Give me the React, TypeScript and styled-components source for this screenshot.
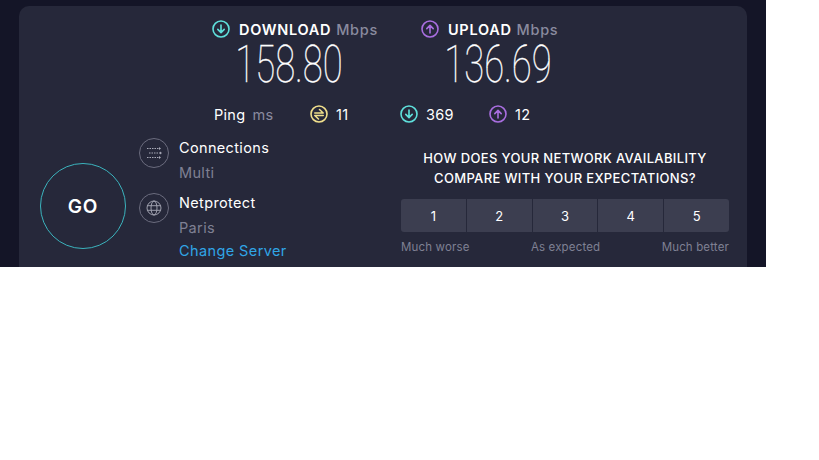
import * as React from "react";
import styled, { createGlobalStyle } from "styled-components";

const GlobalStyle = createGlobalStyle`
  html, body {
    margin: 0;
    padding: 0;
    background: #ffffff;
    font-family: "Inter", "Noto Sans", sans-serif;
  }
`;

const Page = styled.div`
  width: 766px;
  height: 267px;
  box-sizing: border-box;
  padding: 6px 19px 0;
  background: #141527;
  overflow: hidden;
`;

const Card = styled.div`
  height: 280px;
  box-sizing: border-box;
  padding-top: 14px;
  background: #26283a;
  border-radius: 10px;
`;

const Speeds = styled.div`
  display: flex;
  padding-left: 193px;
  gap: 43px;
`;

const SpeedCol = styled.div`
  width: 166px;
  display: flex;
  flex-direction: column;
`;

const SpeedHead = styled.div`
  display: flex;
  align-items: center;
  gap: 9px;
  height: 18px;
`;

const HeadLabel = styled.span`
  font-size: 14.5px;
  font-weight: 600;
  color: #ffffff;
  letter-spacing: 0.7px;
  white-space: nowrap;
`;

const Unit = styled.span`
  font-weight: 500;
  color: #8a8b9f;
  margin-left: 5px;
`;

const Value = styled.div`
  margin: 2px 0 0 -1px;
  height: 49px;
  width: 156px;
  font-family: "Roboto", sans-serif;
  font-weight: 100;
  font-size: 52px;
  line-height: 49px;
  color: #ffffff;
  text-align: center;
  white-space: nowrap;
  transform: scaleX(0.7);
  -webkit-text-stroke: 0.3px #ffffff;
`;

const PingRow = styled.div`
  display: flex;
  align-items: center;
  margin-top: 16px;
  padding-left: 195px;
  height: 18px;
`;

const PingLabel = styled.span`
  width: 96px;
  font-size: 14.5px;
  letter-spacing: 0.3px;
  color: #ffffff;
  white-space: nowrap;
`;

const PingUnit = styled.span`
  color: #8a8b9f;
  margin-left: 7px;
`;

const PingItem = styled.div<{ $width: number }>`
  display: flex;
  align-items: center;
  gap: 8px;
  width: ${(p) => p.$width}px;
  font-size: 14.5px;
  letter-spacing: 0.3px;
  color: #ffffff;
`;

const Lower = styled.div`
  display: flex;
  margin-top: 16px;
`;

const GoColumn = styled.div`
  width: 120px;
  padding: 24px 0 0 21px;
  box-sizing: border-box;
`;

const GoButton = styled.div`
  width: 86px;
  height: 86px;
  box-sizing: border-box;
  border: 1px solid #3bb3bd;
  border-radius: 50%;
  display: flex;
  align-items: center;
  justify-content: center;
  font-size: 19px;
  font-weight: 600;
  letter-spacing: 0.8px;
  color: #ffffff;
`;

const Info = styled.div`
  width: 262px;
  display: flex;
  flex-direction: column;
`;

const InfoRow = styled.div`
  display: flex;
  gap: 10px;
  height: 55px;
`;

const IconRing = styled.div`
  width: 30px;
  height: 30px;
  margin-top: -1px;
  box-sizing: border-box;
  border: 1px solid #6b6c7e;
  border-radius: 50%;
  display: flex;
  align-items: center;
  justify-content: center;
  color: #a9aab8;
`;

const InfoText = styled.div`
  display: flex;
  flex-direction: column;
  gap: 7px;
  font-size: 14.5px;
  line-height: 18px;
  letter-spacing: 0.35px;
`;

const InfoTitle = styled.div`
  color: #ffffff;
`;

const InfoSub = styled.div`
  color: #7f8093;
`;

const ChangeServer = styled.div`
  margin: -7px 0 0 40px;
  font-size: 14.5px;
  line-height: 18px;
  letter-spacing: 0.4px;
  color: #30a5e6;
`;

const Survey = styled.div`
  width: 328px;
  display: flex;
  flex-direction: column;
  padding-top: 9px;
`;

const Question = styled.div`
  font-size: 13px;
  font-weight: 500;
  line-height: 20px;
  letter-spacing: 0.35px;
  text-align: center;
  white-space: nowrap;
  color: #ffffff;
`;

const Scale = styled.div`
  display: grid;
  grid-template-columns: repeat(5, 1fr);
  gap: 1px;
  margin-top: 11px;
  height: 33px;
  border-radius: 3px;
  overflow: hidden;
`;

const ScaleCell = styled.div`
  background: #3c3e50;
  display: flex;
  align-items: center;
  justify-content: center;
  font-size: 13px;
  color: #ffffff;
`;

const ScaleLabels = styled.div`
  display: flex;
  justify-content: space-between;
  margin-top: 8px;
  font-size: 11.5px;
  line-height: 14px;
  letter-spacing: 0.15px;
  color: #7f8093;
`;

const Arrow = ({ color, up }: { color: string; up?: boolean }) => (
  <svg width="18" height="18" viewBox="0 0 18 18" fill="none" stroke={color} strokeWidth="1.6" strokeLinecap="round" strokeLinejoin="round">
    <circle cx="9" cy="9" r="8" />
    {up ? <path d="M9 13V5.5M5.8 8.6 9 5.4l3.2 3.2" /> : <path d="M9 5v7.5M5.8 9.4 9 12.6l3.2-3.2" />}
  </svg>
);

const PingIcon = () => (
  <svg width="18" height="18" viewBox="0 0 18 18" fill="none" stroke="#f0df8c" strokeWidth="1.6" strokeLinecap="round" strokeLinejoin="round">
    <circle cx="9" cy="9" r="8" />
    <path d="M4.800 8h8.400L9.500 4.500M13.200 10.500H4.800L8.500 14" />
  </svg>
);

const ConnectionsIcon = () => (
  <svg width="16" height="14" viewBox="0 0 16 14" fill="none" stroke="currentColor" strokeWidth="1">
    <path d="M1 2.500h12M3 7h11M1 11.500h12" strokeDasharray="1.500 1" />
    <path d="M13 1l2 1.500-2 1.500zM14 5.500l2 1.500-2 1.500zM13 10l2 1.500-2 1.500z" fill="currentColor" stroke="none" />
  </svg>
);

const GlobeIcon = () => (
  <svg width="16" height="16" viewBox="0 0 16 16" fill="none" stroke="currentColor" strokeWidth="0.9">
    <circle cx="8" cy="8" r="7" />
    <ellipse cx="8" cy="8" rx="3" ry="7" />
    <path d="M1.200 5.700h13.600M1.200 10.300h13.600" />
  </svg>
);

export default function App() {
  return (
    <>
      <GlobalStyle />
      <Page>
        <Card>
          <Speeds>
            <SpeedCol>
              <SpeedHead>
                <Arrow color="#5fe0dc" />
                <HeadLabel>
                  DOWNLOAD<Unit>Mbps</Unit>
                </HeadLabel>
              </SpeedHead>
              <Value>158.80</Value>
            </SpeedCol>
            <SpeedCol>
              <SpeedHead>
                <Arrow color="#a96ee0" up />
                <HeadLabel>
                  UPLOAD<Unit>Mbps</Unit>
                </HeadLabel>
              </SpeedHead>
              <Value>136.69</Value>
            </SpeedCol>
          </Speeds>
          <PingRow>
            <PingLabel>
              Ping<PingUnit>ms</PingUnit>
            </PingLabel>
            <PingItem $width={90}>
              <PingIcon />
              11
            </PingItem>
            <PingItem $width={89}>
              <Arrow color="#5fe0dc" />
              369
            </PingItem>
            <PingItem $width={60}>
              <Arrow color="#a96ee0" up />
              12
            </PingItem>
          </PingRow>
          <Lower>
            <GoColumn>
              <GoButton>GO</GoButton>
            </GoColumn>
            <Info>
              <InfoRow>
                <IconRing>
                  <ConnectionsIcon />
                </IconRing>
                <InfoText>
                  <InfoTitle>Connections</InfoTitle>
                  <InfoSub>Multi</InfoSub>
                </InfoText>
              </InfoRow>
              <InfoRow>
                <IconRing>
                  <GlobeIcon />
                </IconRing>
                <InfoText>
                  <InfoTitle>Netprotect</InfoTitle>
                  <InfoSub>Paris</InfoSub>
                </InfoText>
              </InfoRow>
              <ChangeServer>Change Server</ChangeServer>
            </Info>
            <Survey>
              <Question>
                HOW DOES YOUR NETWORK AVAILABILITY
                <br />
                COMPARE WITH YOUR EXPECTATIONS?
              </Question>
              <Scale>
                {[1, 2, 3, 4, 5].map((n) => (
                  <ScaleCell key={n}>{n}</ScaleCell>
                ))}
              </Scale>
              <ScaleLabels>
                <span>Much worse</span>
                <span>As expected</span>
                <span>Much better</span>
              </ScaleLabels>
            </Survey>
          </Lower>
        </Card>
      </Page>
    </>
  );
}
